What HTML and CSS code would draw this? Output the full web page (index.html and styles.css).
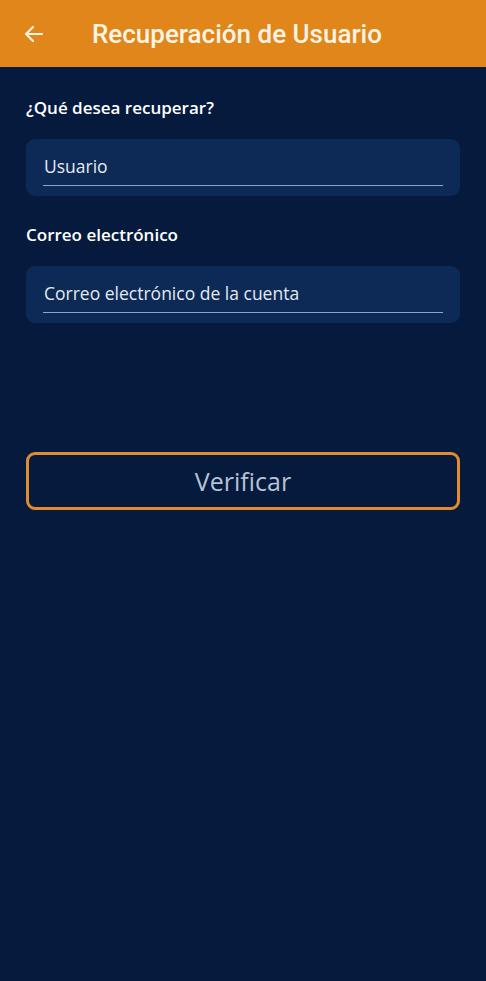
FILE: index.html
```html
<!DOCTYPE html>
<html lang="es">
<head>
<meta charset="utf-8">
<link rel="stylesheet" href="styles.css">
</head>
<body>
<header class="appbar">
  <svg class="back" width="24" height="24" viewBox="0 0 24 24"><path d="M20 12H5M11 5l-7 7 7 7" fill="none" stroke="#fff4e4" stroke-width="2.2" stroke-linecap="round" stroke-linejoin="round"/></svg>
  <h1 class="title">Recuperación de Usuario</h1>
</header>
<main class="content">
  <label class="label">¿Qué desea recuperar?</label>
  <div class="field"><span class="value">Usuario</span></div>
  <label class="label second">Correo electrónico</label>
  <div class="field"><span class="value">Correo electrónico de la cuenta</span></div>
  <button class="verify">Verificar</button>
</main>
</body>
</html>
```
FILE: styles.css
```css
html, body { margin: 0; padding: 0; }
body { background: #051a3c; height: 981px; font-family: "Open Sans", "Noto Sans", sans-serif; }
.appbar { height: 67px; background: #e0861b; display: flex; align-items: center; padding: 0 22px; box-sizing: border-box; }
.back { flex: none; }
.title { margin: 0 0 0 46px; font-family: Roboto, sans-serif; font-weight: 500; font-size: 26px; color: #fff4e4; letter-spacing: 0; }
.content { padding: 0 26px; display: flex; flex-direction: column; }
.label { color: #fff; font-size: 17px; font-weight: 600; margin-top: 29px; line-height: 24px; }
.label.second { margin-top: 27px; }
.field { margin-top: 19px; height: 57px; background: #0c2a55; border-radius: 9px; padding: 0 17px; display: flex; flex-direction: column; justify-content: flex-end; }
.value { color: #e4e9f1; font-size: 17.5px; line-height: 24px; padding-bottom: 7px; border-bottom: 1.5px solid #8ea2c2; margin-bottom: 10px; padding-left: 1px; }
.verify { margin-top: 129px; height: 58px; background: #051a3c; border: 3px solid #df8d2e; border-radius: 9px; color: #b7c3d5; font-family: "Open Sans", sans-serif; font-size: 25px; }
```
